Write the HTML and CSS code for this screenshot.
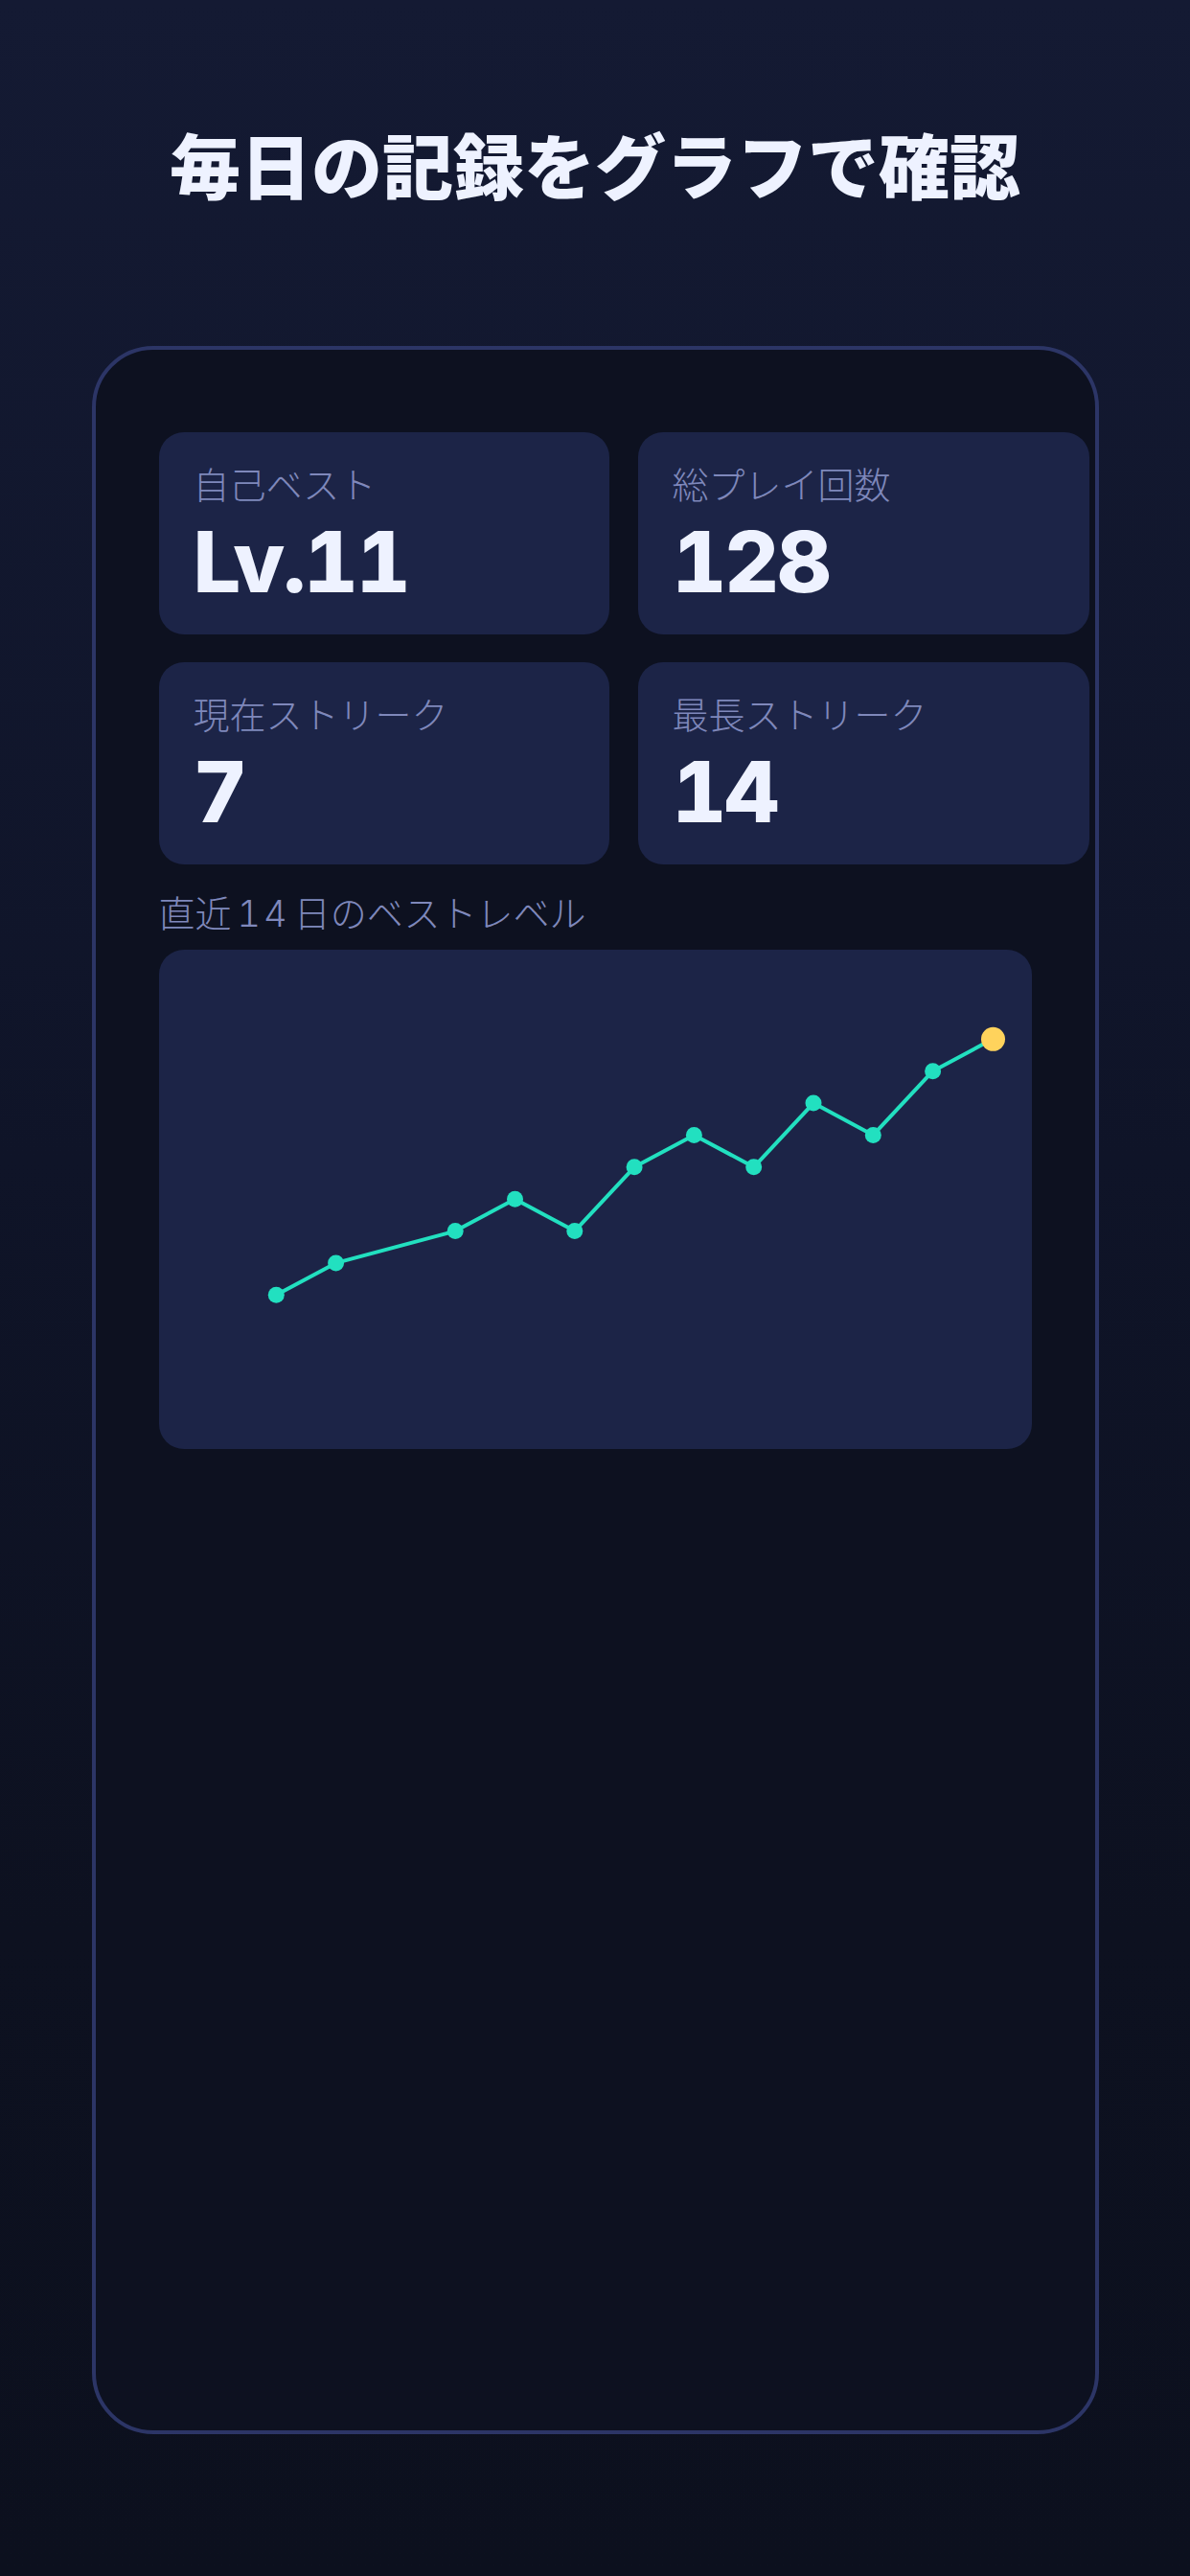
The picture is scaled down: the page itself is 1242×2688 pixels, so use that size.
FILE: index.html
```html
<!DOCTYPE html>
<html lang="ja">
<head>
    <meta charset="UTF-8">
    <meta name="viewport" content="width=device-width, initial-scale=1.0">
    <title>毎日の記録をグラフで確認</title>
    <link rel="stylesheet" href="styles.css">
</head>
<body>
    <div class="page">
        <h1 class="headline">毎日の記録をグラフで確認</h1>

        <div class="device">
            <div class="stats">
                <div class="stat">
                    <div class="stat-label">自己ベスト</div>
                    <div class="stat-value">Lv.11</div>
                </div>
                <div class="stat">
                    <div class="stat-label">総プレイ回数</div>
                    <div class="stat-value">128</div>
                </div>
                <div class="stat">
                    <div class="stat-label">現在ストリーク</div>
                    <div class="stat-value">7</div>
                </div>
                <div class="stat">
                    <div class="stat-label">最長ストリーク</div>
                    <div class="stat-value">14</div>
                </div>
            </div>

            <div class="section-label">直近<span class="num">14</span>日のベストレベル</div>
            <div class="chart">
                <svg class="chart-svg" viewBox="0 0 911 521" width="911" height="521">
                    <polyline class="chart-line" points="122.3,360.3 184.6,326.9 309.2,293.6 371.5,260.2 433.8,293.6 496.1,226.8 558.4,193.4 620.7,226.8 683,160.1 745.3,193.4 807.6,126.7 869.9,93.3"/>
                    <g class="chart-dots">
                        <circle cx="122.3" cy="360.3" r="8.5"/>
                        <circle cx="184.6" cy="326.9" r="8.5"/>
                        <circle cx="309.2" cy="293.6" r="8.5"/>
                        <circle cx="371.5" cy="260.2" r="8.5"/>
                        <circle cx="433.8" cy="293.6" r="8.5"/>
                        <circle cx="496.1" cy="226.8" r="8.5"/>
                        <circle cx="558.4" cy="193.4" r="8.5"/>
                        <circle cx="620.7" cy="226.8" r="8.5"/>
                        <circle cx="683" cy="160.1" r="8.5"/>
                        <circle cx="745.3" cy="193.4" r="8.5"/>
                        <circle cx="807.6" cy="126.7" r="8.5"/>
                    </g>
                    <!-- today's best is highlighted -->
                    <circle class="chart-today" cx="870.5" cy="93.3" r="12.5"/>
                </svg>
            </div>
        </div>
    </div>
</body>
</html>
```

FILE: styles.css
```css
body {
    margin: 0;
    min-height: 2688px;
    background: linear-gradient(180deg, #141a33 0%, #0f1428 45%, #0d1120 75%, #0c101e 100%);
    font-family: "Noto Sans CJK JP", "Noto Sans", sans-serif;
    color: #eef2ff;
}
.page {
    padding-top: 126px;
}
.headline {
    margin: 0;
    text-align: center;
    font-size: 74px;
    font-weight: 900;
    line-height: 1.2;
    color: #eef2ff;
}
.device {
    box-sizing: border-box;
    width: 1051px;
    height: 2179px;
    margin: 146px auto 0;
    padding: 86px 66px 0;
    background-color: #0d1120;
    border: 4px solid #2c3566;
    border-radius: 64px;
}
.stats {
    display: grid;
    grid-template-columns: 470px 471px;
    gap: 29px 30px;
}
.stat {
    box-sizing: border-box;
    height: 211px;
    padding: 33px 36px 0;
    background-color: #1c2447;
    border-radius: 26px;
}
.stat-label {
    font-family: Inter, "Noto Sans CJK JP", sans-serif;
    font-size: 38px;
    font-weight: 300;
    line-height: 44px;
    color: #7f88bb;
}
.stat-value {
    margin-top: 10px;
    font-family: Inter, "Noto Sans CJK JP", sans-serif;
    font-size: 88px;
    font-weight: 800;
    line-height: 96px;
    font-variant-numeric: tabular-nums;
    letter-spacing: -2px;
    color: #eef2ff;
}
.section-label {
    margin-top: 24px;
    font-family: Inter, "Noto Sans CJK JP", sans-serif;
    font-size: 38px;
    font-weight: 300;
    line-height: 54px;
    color: #7f88bb;
}
.section-label .num {
    padding: 0 4px 0 6px;
    letter-spacing: 3px;
    font-variant-numeric: tabular-nums;
}
.chart {
    margin-top: 11px;
    width: 911px;
    height: 521px;
    background-color: #1c2447;
    border-radius: 26px;
    overflow: hidden;
}
.chart-svg {
    display: block;
}
.chart-line {
    fill: none;
    stroke: #22e0c0;
    stroke-width: 4;
    stroke-linejoin: round;
}
.chart-dots circle {
    fill: #22e0c0;
}
.chart-today {
    fill: #ffd35c;
}
```
